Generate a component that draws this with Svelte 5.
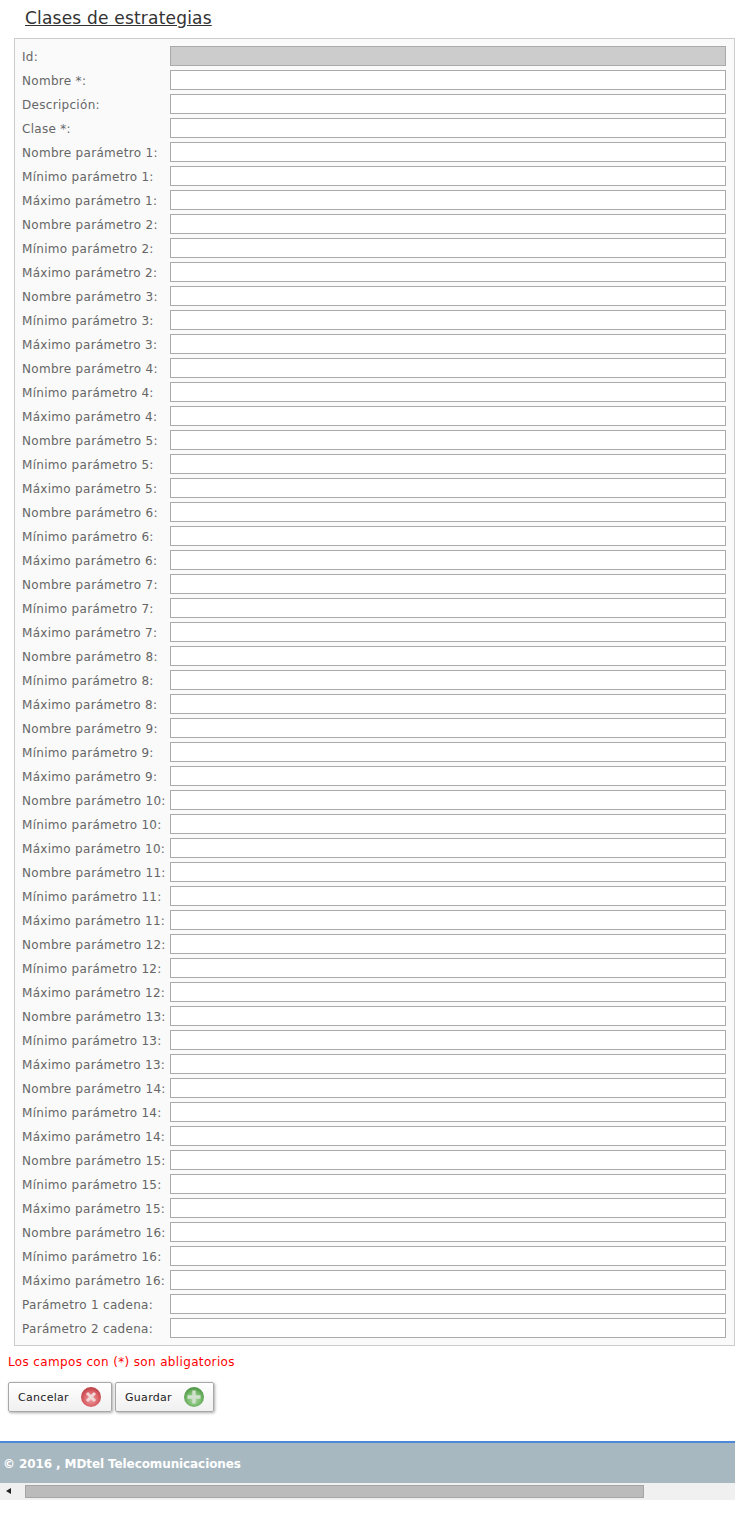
<script>
  const fields = ['Id:', 'Nombre *:', 'Descripción:', 'Clase *:'];
  for (let i = 1; i <= 16; i++) {
    fields.push(`Nombre parámetro ${i}:`, `Mínimo parámetro ${i}:`, `Máximo parámetro ${i}:`);
  }
  fields.push('Parámetro 1 cadena:', 'Parámetro 2 cadena:');
</script>

<div class="page">
  <h1 class="title">Clases de estrategias</h1>

  <form class="panel">
    {#each fields as label, i}
      <div class="row">
        <label for={`f${i}`}>{label}</label>
        <input id={`f${i}`} type="text" class:disabled={i === 0} disabled={i === 0} />
      </div>
    {/each}
  </form>

  <p class="note">Los campos con (*) son abligatorios</p>

  <div class="actions">
    <button type="button">
      Cancelar
      <svg viewBox="0 0 20 20" width="20" height="20">
        <defs>
          <radialGradient id="red" cx="50%" cy="60%" r="58%">
            <stop offset="0" stop-color="#f0a6aa" />
            <stop offset="0.6" stop-color="#dc656b" />
            <stop offset="1" stop-color="#bd4046" />
          </radialGradient>
        </defs>
        <circle cx="10" cy="10" r="10" fill="url(#red)" />
        <path d="M6 6l8 8M14 6l-8 8" stroke="#f0d8d8" stroke-width="3" />
      </svg>
    </button>
    <button type="button">
      Guardar
      <svg viewBox="0 0 20 20" width="20" height="20">
        <defs>
          <radialGradient id="green" cx="50%" cy="60%" r="58%">
            <stop offset="0" stop-color="#b5dcae" />
            <stop offset="0.6" stop-color="#78ba6c" />
            <stop offset="1" stop-color="#4c9545" />
          </radialGradient>
        </defs>
        <circle cx="10" cy="10" r="10" fill="url(#green)" />
        <path d="M10 3.5v13M3.5 10h13" stroke="#d0e2cd" stroke-width="3.4" />
      </svg>
    </button>
  </div>

  <footer class="footer">© 2016 , MDtel Telecomunicaciones</footer>

  <div class="scrollbar">
    <span class="arrow"></span>
    <div class="thumb"></div>
  </div>
</div>

<style>
  :global(body) {
    margin: 0;
    background: #fff;
  }

  .page {
    font-family: "DejaVu Sans", Verdana, sans-serif;
    font-size: 12px;
    letter-spacing: 0.3px;
    color: #666;
    height: 1518px;
    overflow: hidden;
  }

  .title {
    margin: 0 0 0 25px;
    padding-top: 8px;
    width: max-content;
    font-size: 17px;
    letter-spacing: 0.2px;
    font-weight: normal;
    line-height: 20px;
    color: #333;
    text-decoration: underline;
  }

  .panel {
    box-sizing: border-box;
    margin: 10px 0 0 14px;
    padding: 5px 8px 8px 7px;
    height: 1308px;
    background: #fafafa;
    border: 1px solid #ccc;
  }

  .row {
    display: flex;
    align-items: center;
    height: 24px;
  }

  label {
    width: 148px;
    flex: none;
    padding-top: 1px;
    white-space: nowrap;
  }

  input {
    box-sizing: border-box;
    flex: 1;
    min-width: 0;
    height: 20px;
    margin: 0;
    padding: 0 3px;
    background: #fff;
    border: 1px solid #aaa;
    border-radius: 0;
  }

  input.disabled {
    background: #ccc;
  }

  .note {
    margin: 9px 0 0 8px;
    line-height: 15px;
    letter-spacing: 0.35px;
    color: #f00;
  }

  .actions {
    display: flex;
    gap: 3px;
    margin: 12px 0 0 8px;
  }

  button {
    box-sizing: border-box;
    display: flex;
    align-items: center;
    justify-content: space-between;
    height: 30px;
    padding: 0 10px 0 9px;
    font-family: inherit;
    font-size: 11px;
    letter-spacing: 0.3px;
    color: #222;
    background: linear-gradient(#fff, #f0f0f0);
    border: 1px solid #a8a8a8;
    border-radius: 2px;
    box-shadow: 1px 1px 3px #aaa;
  }

  button svg {
    filter: blur(0.4px);
  }

  button:first-child {
    width: 104px;
  }

  button:nth-child(2) {
    width: 99px;
    padding-right: 9px;
  }

  .footer {
    margin-top: 29px;
    height: 42px;
    box-sizing: border-box;
    padding-left: 3px;
    line-height: 42px;
    font-weight: bold;
    font-size: 12px;
    letter-spacing: -0.1px;
    color: #fff;
    background: #a8b8c0;
    border-top: 2px solid #4a8ad8;
  }

  .scrollbar {
    position: relative;
    height: 17px;
    background: #f0f0f0;
  }

  .arrow {
    position: absolute;
    left: 6px;
    top: 5px;
    border: 3.5px solid transparent;
    border-left: 0;
    border-right: 5px solid #222;
  }

  .thumb {
    position: absolute;
    left: 25px;
    top: 2px;
    width: 619px;
    height: 13px;
    box-sizing: border-box;
    background: #bbb;
    border: 1px solid #a5a5a5;
  }
</style>
